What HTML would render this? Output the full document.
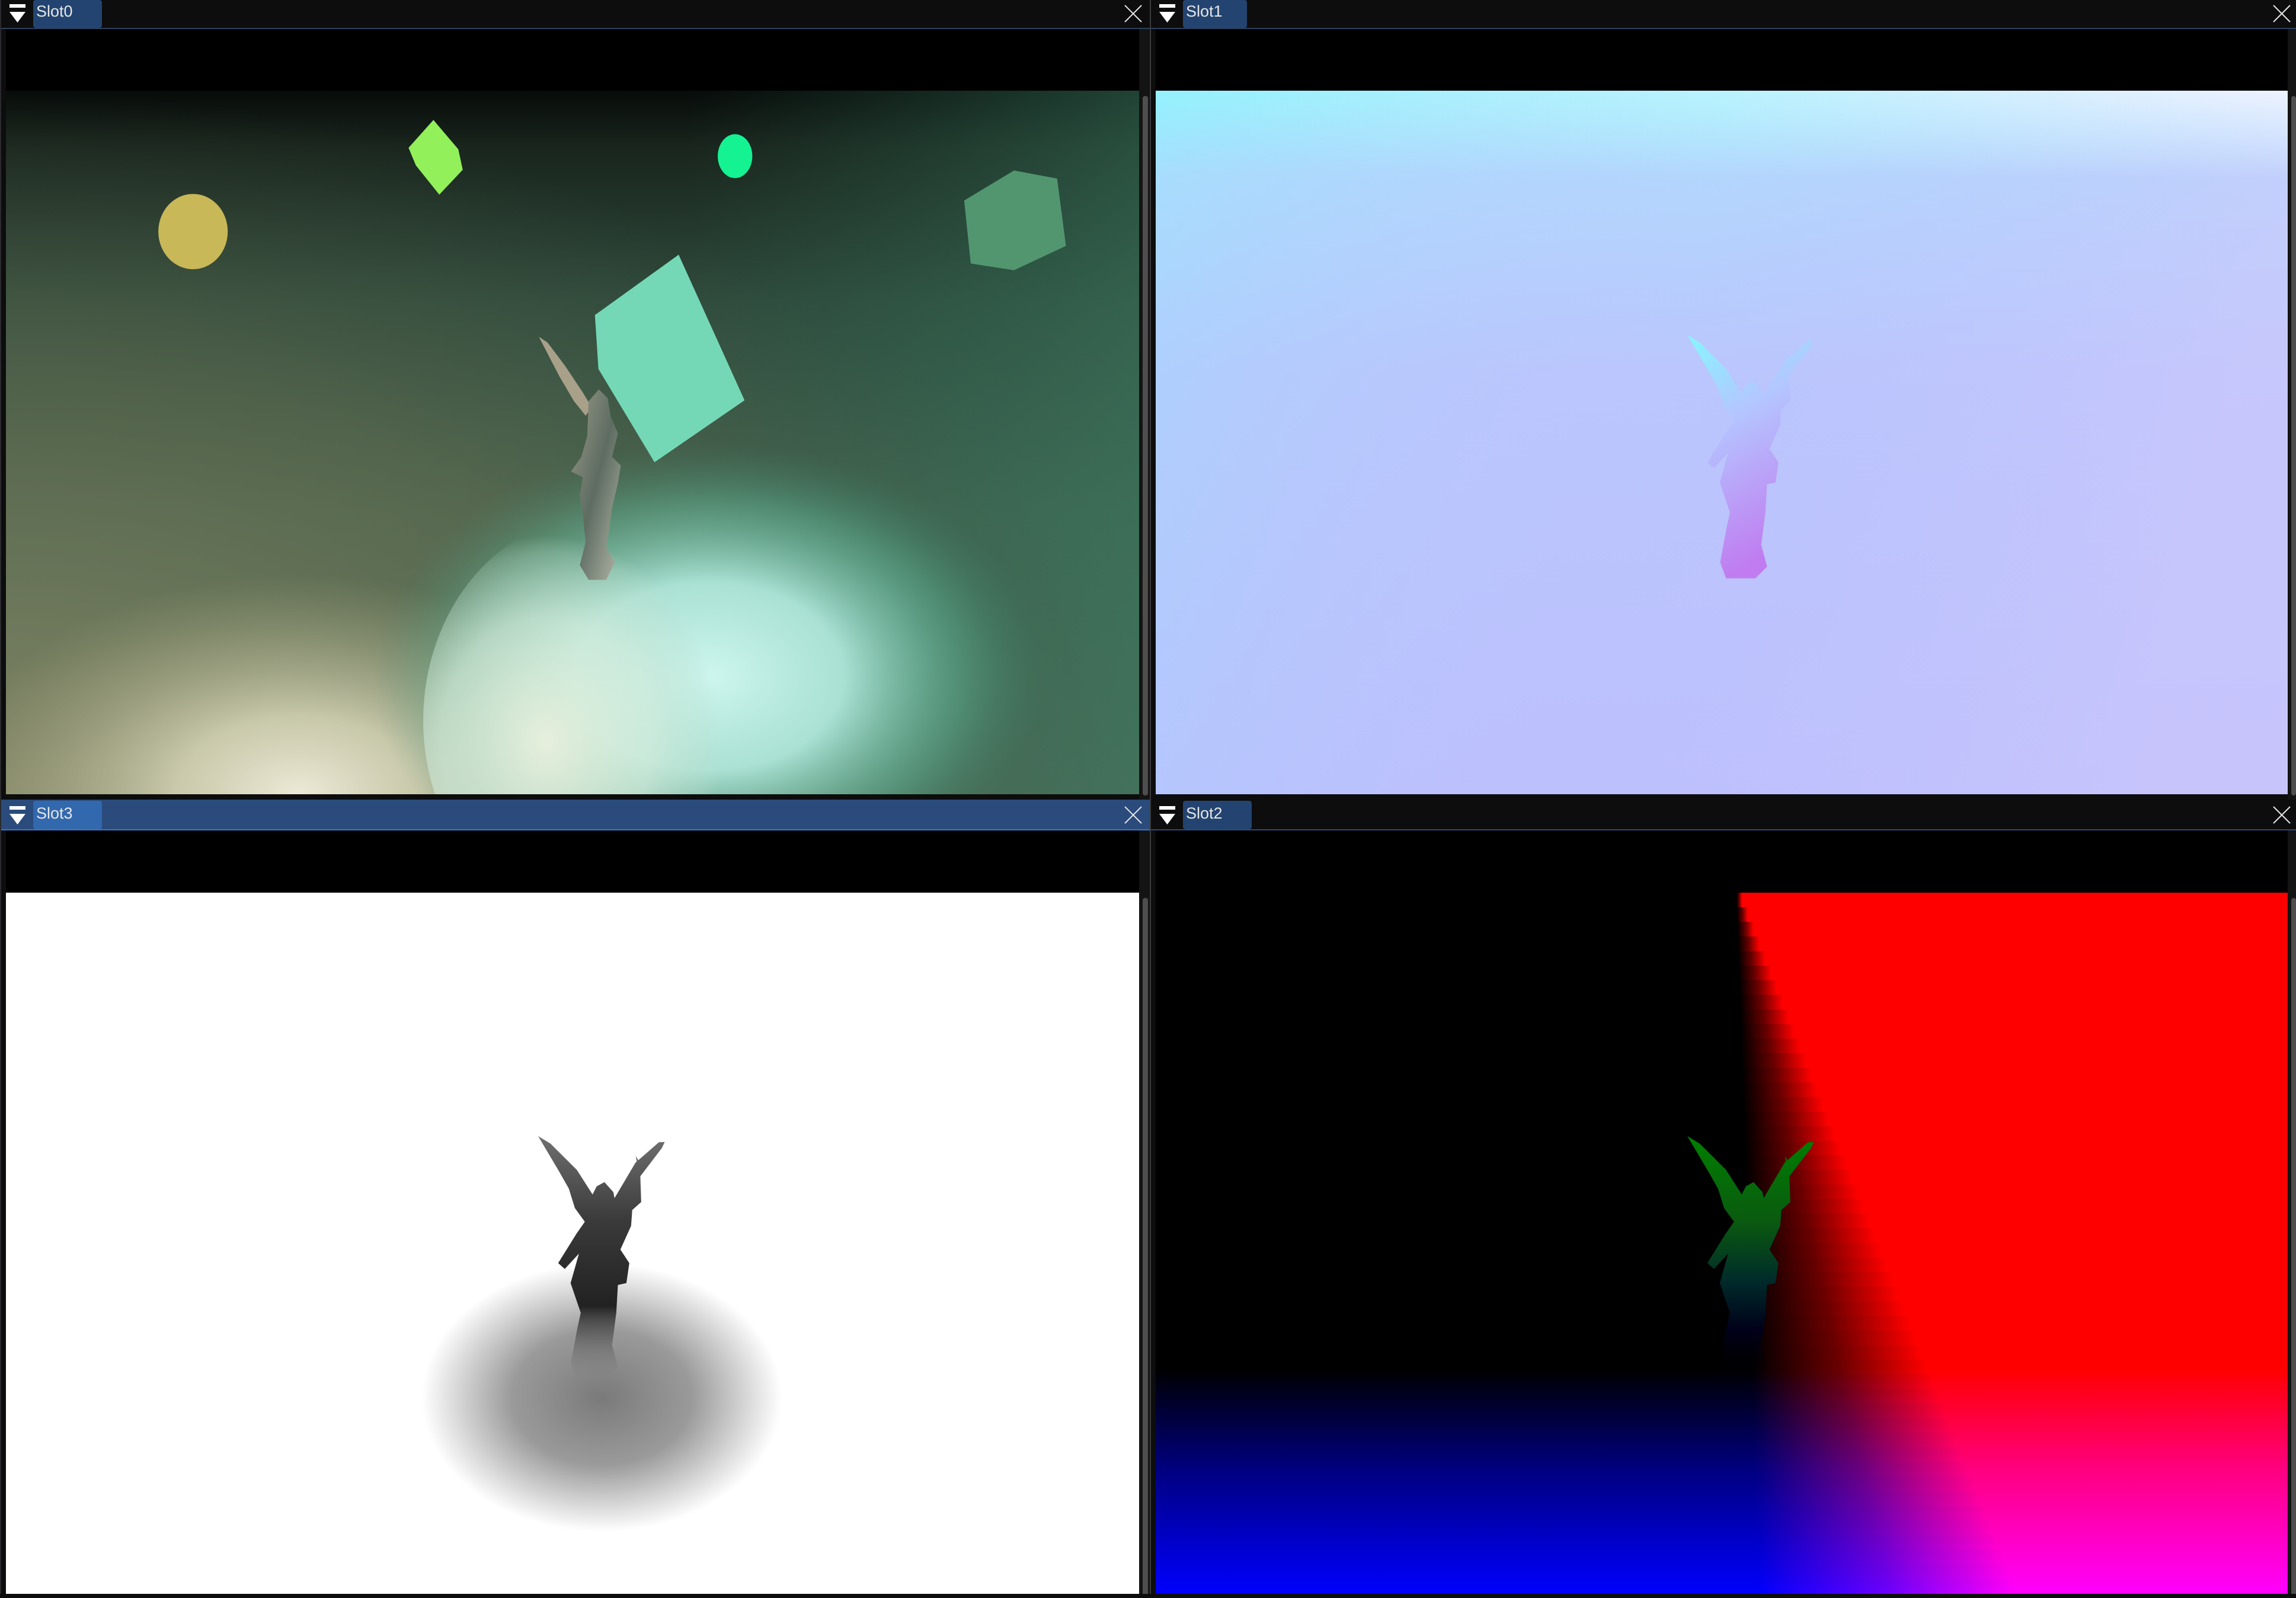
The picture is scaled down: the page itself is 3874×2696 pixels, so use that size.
<!DOCTYPE html>
<html><head><meta charset="utf-8"><style>
html,body{margin:0;padding:0;background:#0d0d0d;overflow:hidden}
svg{display:block}
text{font-family:"Liberation Sans","DejaVu Sans",sans-serif}
</style></head><body>
<svg width="3874" height="2696" viewBox="0 0 3874 2696" xmlns="http://www.w3.org/2000/svg">
<defs>
<path id="angel" d="M363.5,166.8 L372,172 L390,190 L400.7,206.8 L403.5,201.2 L408.8,198.3 L414.9,205.2 L415.7,209.3 L430,185 L446,171 L450,170.8 L448,175 L433,194.7 L430.2,180.5 L433,185 L433.9,212 L427.8,217.4 L427,228.3 L419.7,244.5 L425.8,253.8 L423.8,267.5 L418,268.8 L416.9,287.8 L414,310 L418,325 L410,333 L390,333 L386,322 L390,300 L392.6,287.8 L385.7,267.5 L391.4,247.3 L381.7,257.8 L377.2,253.8 L389.8,233.5 L395.4,225.5 L388.6,216.1 L384.5,202.8 L377.6,190.6 Z"/>
<linearGradient id="tlbg" x1="0" y1="0" x2="0" y2="1">
<stop offset="0" stop-color="#070b09"/><stop offset="0.08" stop-color="#19251d"/><stop offset="0.3" stop-color="#2e4a3c"/><stop offset="0.6" stop-color="#3f624f"/><stop offset="1" stop-color="#4a6a58"/></linearGradient>
<radialGradient id="olive" cx="0" cy="1" r="1"><stop offset="0" stop-color="#8a8a68" stop-opacity="0.9"/><stop offset="0.6" stop-color="#6a6e50" stop-opacity="0.5"/><stop offset="1" stop-color="#4a5a44" stop-opacity="0"/></radialGradient>
<linearGradient id="tlright" x1="0" y1="0" x2="1" y2="0"><stop offset="0.6" stop-color="#2f6a55" stop-opacity="0"/><stop offset="1" stop-color="#3a7a60" stop-opacity="0.5"/></linearGradient>
<radialGradient id="cream"><stop offset="0" stop-color="#ece9d6"/><stop offset="0.35" stop-color="#d8d6b8" stop-opacity="0.85"/><stop offset="1" stop-color="#a8a882" stop-opacity="0"/></radialGradient>
<radialGradient id="spot" cx="0.5" cy="0.5"><stop offset="0" stop-color="#cdf6ef"/><stop offset="0.4" stop-color="#b4eee2" stop-opacity="0.9"/><stop offset="0.75" stop-color="#62c4a4" stop-opacity="0.4"/><stop offset="1" stop-color="#3c8a70" stop-opacity="0"/></radialGradient>
<radialGradient id="spot2" cx="0.35" cy="0.55"><stop offset="0" stop-color="#e6efdc"/><stop offset="0.6" stop-color="#d4ecdc" stop-opacity="0.7"/><stop offset="0.92" stop-color="#c0e0d0" stop-opacity="0.25"/><stop offset="1" stop-color="#c0e0d0" stop-opacity="0"/></radialGradient>
<linearGradient id="stat" x1="0" y1="0" x2="1" y2="1"><stop offset="0" stop-color="#9a9a88"/><stop offset="0.5" stop-color="#5e6c62"/><stop offset="1" stop-color="#b4b8a8"/></linearGradient>
<linearGradient id="trv" x1="0" y1="0" x2="0" y2="1"><stop offset="0" stop-color="#9af2fd"/><stop offset="0.12" stop-color="#b3d6fd"/><stop offset="0.4" stop-color="#bac6fd"/><stop offset="1" stop-color="#bcc0fd"/></linearGradient>
<linearGradient id="trh" x1="0" y1="0" x2="1" y2="0.15"><stop offset="0" stop-color="#80f4ff" stop-opacity="0.25"/><stop offset="0.5" stop-color="#c0c0fc" stop-opacity="0"/><stop offset="1" stop-color="#d2c8fc" stop-opacity="0.5"/></linearGradient>
<linearGradient id="trtoph" x1="0" y1="0" x2="1" y2="0"><stop offset="0" stop-color="#e8f8ff" stop-opacity="0"/><stop offset="0.5" stop-color="#e8f4ff" stop-opacity="0.4"/><stop offset="1" stop-color="#f4f4ff" stop-opacity="0.9"/></linearGradient>
<linearGradient id="fadev" x1="0" y1="0" x2="0" y2="1"><stop offset="0" stop-color="#fff"/><stop offset="1" stop-color="#000"/></linearGradient>
<mask id="topmask"><rect x="0" y="0" width="774" height="60" fill="url(#fadev)"/></mask>
<linearGradient id="trs" x1="0" y1="0" x2="0.3" y2="1"><stop offset="0" stop-color="#86f6ff"/><stop offset="0.4" stop-color="#b4c6ff"/><stop offset="1" stop-color="#c07cf0"/></linearGradient>
<radialGradient id="shad"><stop offset="0" stop-color="#7a7a7a"/><stop offset="0.5" stop-color="#9a9a9a"/><stop offset="1" stop-color="#fff"/></radialGradient>
<linearGradient id="bls" x1="0" y1="0" x2="0" y2="1"><stop offset="0" stop-color="#707070"/><stop offset="0.35" stop-color="#3a3a3a"/><stop offset="0.7" stop-color="#222"/><stop offset="1" stop-color="#777" stop-opacity="0"/></linearGradient>
<linearGradient id="brs" x1="0" y1="0" x2="0" y2="1"><stop offset="0" stop-color="#008000"/><stop offset="0.35" stop-color="#0a5a10"/><stop offset="0.6" stop-color="#002a2a"/><stop offset="0.8" stop-color="#00001a"/><stop offset="1" stop-color="#000" stop-opacity="0"/></linearGradient>
<linearGradient id="blue" x1="0" y1="0" x2="0" y2="1"><stop offset="0" stop-color="#000000"/><stop offset="0.45" stop-color="#000080"/><stop offset="1" stop-color="#0000ff"/></linearGradient>
<linearGradient id="rg" x1="0" y1="0" x2="1" y2="0"><stop offset="0" stop-color="#000"/><stop offset="0.5" stop-color="#6a0000"/><stop offset="1" stop-color="#f00"/></linearGradient>
</defs>

<rect width="3874" height="2696" fill="#0d0d0d"/>

<rect x="0" y="0" width="1940" height="47" fill="#0d0d0d"/>
<rect x="0" y="47" width="1940" height="2" fill="#2c4060"/>
<rect x="56" y="0" width="116" height="47" rx="4" fill="#234470"/>
<rect x="16" y="7" width="27" height="6" fill="#fff"/><polygon points="16,20 43,20 29.5,38" fill="#fff"/>
<text x="61" y="28" font-size="27" fill="#e6e6e6">Slot0</text>
<path d="M1898,9 L1926,37 M1926,9 L1898,37" stroke="#e6e6e6" stroke-width="2"/>

<rect x="1942" y="0" width="1932" height="47" fill="#0d0d0d"/>
<rect x="1942" y="47" width="1932" height="2" fill="#2c4060"/>
<rect x="1996" y="0" width="108" height="47" rx="4" fill="#234470"/>
<rect x="1956" y="7" width="27" height="6" fill="#fff"/><polygon points="1956,20 1983,20 1969.5,38" fill="#fff"/>
<text x="2001" y="28" font-size="27" fill="#e6e6e6">Slot1</text>
<path d="M3836,9 L3864,37 M3864,9 L3836,37" stroke="#e6e6e6" stroke-width="2"/>

<rect x="1940" y="0" width="2" height="2696" fill="#3a3a3d"/>
<rect x="0" y="0" width="2" height="2696" fill="#2a2a2e"/>

<rect x="10" y="49" width="1912" height="104" fill="#000"/>
<rect x="1950" y="49" width="1910" height="104" fill="#000"/>

<rect x="1922" y="49" width="18" height="1300" fill="#141414"/>
<rect x="1928" y="162" width="9" height="1180" rx="4" fill="#4e4e4e"/>
<rect x="3860" y="49" width="14" height="1300" fill="#141414"/>
<rect x="3866" y="162" width="8" height="1180" rx="4" fill="#4e4e4e"/>

<svg x="10" y="153" width="1912" height="1187" viewBox="0 0 774 480.4" preserveAspectRatio="none">
<rect width="774" height="481" fill="url(#tlbg)"/>
<rect width="774" height="481" fill="url(#tlright)"/>
<rect width="774" height="481" fill="url(#olive)"/>
<ellipse cx="200" cy="480" rx="240" ry="150" fill="url(#cream)"/>
<ellipse cx="480" cy="400" rx="230" ry="160" fill="url(#spot)"/>
<ellipse cx="405" cy="430" rx="120" ry="140" fill="url(#spot2)"/>
<ellipse cx="127.8" cy="96.2" rx="23.7" ry="25.7" fill="#c8b858"/>
<polygon points="292,20 309,40 312,54 296,71 280,51 275,39" fill="#92f05a"/>
<ellipse cx="498" cy="44.7" rx="11.8" ry="15" fill="#14f292"/>
<polygon points="688.6,54.5 718,60 724,106 688.6,122.6 659,118 654.5,75" fill="#52966f"/>
<polygon points="459.5,112 504.5,211.4 443,253.7 404.7,190 402.3,153.2" fill="#74d8b6"/>
<path d="M364,168 L370,172 L382,188 L394,206 L400,216 L396,222 L388,212 L378,195 Z" fill="#a8a088"/>
<path d="M398,212 L405,204 L411,210 L413,222 L418,234 L414,250 L420,256 L418,268 L414,285 L412,300 L410,312 L416,322 L410,334 L398,334 L392,324 L396,308 L394,290 L392,276 L394,264 L386,260 L393,250 L397,236 Z" fill="url(#stat)"/>
</svg>

<svg x="1950" y="153" width="1910" height="1187" viewBox="0 0 774 480.4" preserveAspectRatio="none">
<rect width="774" height="481" fill="url(#trv)"/>
<rect width="774" height="481" fill="url(#trh)"/>
<rect x="0" y="0" width="774" height="60" fill="url(#trtoph)" mask="url(#topmask)"/>
<use href="#angel" fill="url(#trs)"/>
</svg>

<rect x="2" y="1349" width="1938" height="50" fill="#2a4b7b"/>
<rect x="2" y="1399" width="1938" height="2" fill="#3a78c8"/>
<rect x="56" y="1351" width="116" height="48" rx="4" fill="#3268ad"/>
<rect x="16" y="1360" width="27" height="6" fill="#fff"/><polygon points="16,1373 43,1373 29.5,1391" fill="#fff"/>
<text x="61" y="1381" font-size="27" fill="#e6e6e6">Slot3</text>
<path d="M1898,1361 L1926,1389 M1926,1361 L1898,1389" stroke="#e6e6e6" stroke-width="2"/>

<rect x="1942" y="1349" width="1932" height="50" fill="#0d0d0d"/>
<rect x="1942" y="1399" width="1932" height="2" fill="#2c4a78"/>
<rect x="1996" y="1351" width="116" height="48" rx="4" fill="#234470"/>
<rect x="1956" y="1360" width="27" height="6" fill="#fff"/><polygon points="1956,1373 1983,1373 1969.5,1391" fill="#fff"/>
<text x="2001" y="1381" font-size="27" fill="#e6e6e6">Slot2</text>
<path d="M3836,1361 L3864,1389 M3864,1361 L3836,1389" stroke="#e6e6e6" stroke-width="2"/>

<rect x="10" y="1401" width="1912" height="105" fill="#000"/>
<rect x="1950" y="1401" width="1910" height="105" fill="#000"/>

<rect x="1922" y="1401" width="18" height="1295" fill="#141414"/>
<rect x="1928" y="1515" width="9" height="1178" rx="4" fill="#4e4e4e"/>
<rect x="3860" y="1401" width="14" height="1295" fill="#141414"/>
<rect x="3866" y="1515" width="8" height="1178" rx="4" fill="#4e4e4e"/>

<svg x="10" y="1506" width="1912" height="1183" viewBox="0 0 774 480.4" preserveAspectRatio="none">
<rect width="774" height="481" fill="#fff"/>
<ellipse cx="407" cy="346" rx="123" ry="92" fill="url(#shad)"/>
<use href="#angel" fill="url(#bls)"/>
</svg>

<svg x="1950" y="1506" width="1910" height="1183" viewBox="0 0 774 480.4" preserveAspectRatio="none">
<rect width="774" height="481" fill="#000"/>
<polygon points="397,0 774,0 774,481 587,481" fill="#f00"/>
<g fill="url(#rg)">
<rect x="397.16" y="0" width="3.80" height="10.5"/>
<rect x="397.47" y="10" width="7.45" height="10.5"/>
<rect x="397.78" y="20" width="11.10" height="10.5"/>
<rect x="398.09" y="30" width="14.74" height="10.5"/>
<rect x="398.41" y="40" width="18.38" height="10.5"/>
<rect x="398.72" y="50" width="22.03" height="10.5"/>
<rect x="399.03" y="60" width="25.68" height="10.5"/>
<rect x="399.34" y="70" width="29.33" height="10.5"/>
<rect x="399.66" y="80" width="32.97" height="10.5"/>
<rect x="399.97" y="90" width="36.61" height="10.5"/>
<rect x="400.28" y="100" width="40.26" height="10.5"/>
<rect x="400.59" y="110" width="43.91" height="10.5"/>
<rect x="400.91" y="120" width="47.55" height="10.5"/>
<rect x="401.22" y="130" width="51.20" height="10.5"/>
<rect x="401.53" y="140" width="54.85" height="10.5"/>
<rect x="401.84" y="150" width="58.49" height="10.5"/>
<rect x="402.16" y="160" width="62.13" height="10.5"/>
<rect x="402.47" y="170" width="65.78" height="10.5"/>
<rect x="402.78" y="180" width="69.43" height="10.5"/>
<rect x="403.09" y="190" width="73.08" height="10.5"/>
<rect x="403.41" y="200" width="76.72" height="10.5"/>
<rect x="403.72" y="210" width="80.36" height="10.5"/>
<rect x="404.03" y="220" width="84.01" height="10.5"/>
<rect x="404.34" y="230" width="87.66" height="10.5"/>
<rect x="404.66" y="240" width="91.30" height="10.5"/>
<rect x="404.97" y="250" width="94.95" height="10.5"/>
<rect x="405.28" y="260" width="98.60" height="10.5"/>
<rect x="405.59" y="270" width="102.24" height="10.5"/>
<rect x="405.91" y="280" width="105.88" height="10.5"/>
<rect x="406.22" y="290" width="109.53" height="10.5"/>
<rect x="406.53" y="300" width="113.18" height="10.5"/>
<rect x="406.84" y="310" width="116.83" height="10.5"/>
<rect x="407.16" y="320" width="120.47" height="10.5"/>
<rect x="407.47" y="330" width="124.11" height="10.5"/>
<rect x="407.78" y="340" width="127.76" height="10.5"/>
<rect x="408.09" y="350" width="131.41" height="10.5"/>
<rect x="408.41" y="360" width="135.05" height="10.5"/>
<rect x="408.72" y="370" width="138.70" height="10.5"/>
<rect x="409.03" y="380" width="142.35" height="10.5"/>
<rect x="409.34" y="390" width="145.99" height="10.5"/>
<rect x="409.66" y="400" width="149.63" height="10.5"/>
<rect x="409.97" y="410" width="153.28" height="10.5"/>
<rect x="410.28" y="420" width="156.93" height="10.5"/>
<rect x="410.59" y="430" width="160.58" height="10.5"/>
<rect x="410.91" y="440" width="164.22" height="10.5"/>
<rect x="411.22" y="450" width="167.86" height="10.5"/>
<rect x="411.53" y="460" width="171.51" height="10.5"/>
<rect x="411.84" y="470" width="175.16" height="11"/>
</g>
<rect x="0" y="326" width="774" height="155" fill="url(#blue)" style="mix-blend-mode:screen"/>
<use href="#angel" fill="url(#brs)"/>
</svg>

<rect x="0" y="2689" width="3874" height="7" fill="#0d0d0d"/>
</svg>
</body></html>
